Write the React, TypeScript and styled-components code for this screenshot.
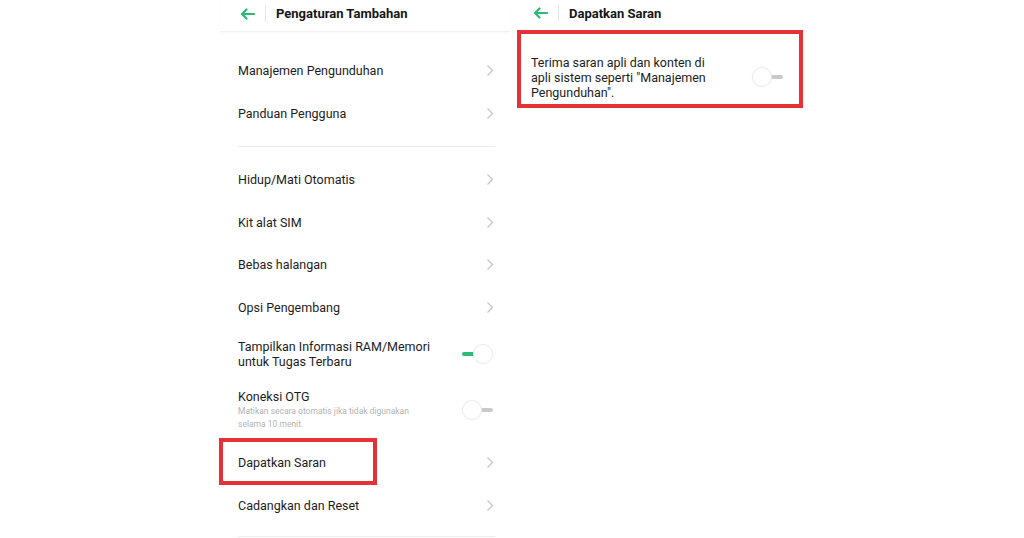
import styled, { createGlobalStyle } from "styled-components";

const GlobalStyle = createGlobalStyle`
  body {
    margin: 0;
    background: #ffffff;
    font-family: Roboto, "Liberation Sans", Arial, sans-serif;
    color: #1c1c1c;
  }
`;

const Page = styled.div`
  display: flex;
  align-items: flex-start;
  width: 1024px;
  height: 538px;
  padding-left: 220px;
  box-sizing: border-box;
  overflow: hidden;
`;

const Panel = styled.section<{ $width: number }>`
  width: ${(p) => p.$width}px;
  display: flex;
  flex-direction: column;
`;

const Header = styled.header<{ $pad: number; $shadow?: boolean }>`
  height: ${(p) => (p.$shadow ? 32 : 30)}px;
  display: flex;
  align-items: center;
  padding-left: ${(p) => p.$pad}px;
  padding-bottom: 4px;
  box-sizing: border-box;
  border-bottom: ${(p) => (p.$shadow ? "1px solid #f1f1f1" : "none")};
  box-shadow: ${(p) => (p.$shadow ? "0 1px 2px rgba(0,0,0,0.03)" : "none")};
`;

const Divider = styled.span`
  width: 1px;
  height: 16px;
  background: #e6e6e6;
  margin: 0 10px 0 10px;
`;

const Title = styled.h1`
  margin: 0;
  font-size: 13px;
  font-weight: 700;
  color: #161616;
`;

const List = styled.div`
  padding: 16.5px 15px 0 18px;
  display: flex;
  flex-direction: column;
`;

const Group = styled.div<{ $top?: number }>`
  display: flex;
  flex-direction: column;
  margin-top: ${(p) => p.$top ?? 0}px;
`;

const Rule = styled.div<{ $top: number }>`
  height: 1px;
  background: #ececec;
  margin-top: ${(p) => p.$top}px;
`;

const Row = styled.div<{ $h?: number; $mark?: boolean }>`
  position: relative;
  height: ${(p) => p.$h ?? 42.5}px;
  display: flex;
  align-items: center;
  justify-content: space-between;

  ${(p) =>
    p.$mark &&
    `
    &::before {
      content: "";
      position: absolute;
      left: -19px;
      top: -4px;
      width: 158px;
      height: 47px;
      border: 4px solid #e53238;
      box-sizing: border-box;
    }
  `}
`;

const Texts = styled.div`
  display: flex;
  flex-direction: column;
`;

const Label = styled.div`
  font-size: 12.5px;
  line-height: 15px;
  color: #1c1c1c;
`;

const Sub = styled.div`
  font-size: 8.5px;
  line-height: 13px;
  color: #b3b3b3;
  margin-top: 1px;
`;

const SuggestBox = styled.div`
  margin: 0 0 0 7px;
  width: 286px;
  height: 78px;
  border: 4px solid #e53238;
  box-sizing: border-box;
  display: flex;
  align-items: center;
  justify-content: space-between;
  padding: 16px 14px 0 10px;
`;

const BoxText = styled.div`
  font-size: 12.5px;
  line-height: 15px;
  color: #1c1c1c;
  width: 190px;
`;

const Track = styled.div`
  position: relative;
  width: 31px;
  height: 22px;
  margin-right: 2px;
  flex-shrink: 0;
`;

const Bar = styled.span<{ $on: boolean }>`
  position: absolute;
  top: 9px;
  ${(p) => (p.$on ? "left: 0;" : "right: 0;")}
  width: 13px;
  height: 4px;
  border-radius: 2px;
  background: ${(p) => (p.$on ? "#2dba74" : "#c9c9c9")};
`;

const Knob = styled.span<{ $on: boolean }>`
  position: absolute;
  top: 1px;
  ${(p) => (p.$on ? "right: 0;" : "left: 0;")}
  width: 20px;
  height: 20px;
  border-radius: 50%;
  background: #fff;
  box-sizing: border-box;
  border: 1px solid #ececec;
  box-shadow: 0 0 2px rgba(0, 0, 0, 0.05);
`;

function Toggle({ on }: { on: boolean }) {
  return (
    <Track>
      <Bar $on={on} />
      <Knob $on={on} />
    </Track>
  );
}

function BackArrow() {
  return (
    <svg width="15" height="12" viewBox="0 0 15 12" fill="none">
      <path
        d="M14 6H2M6.5 1.5L2 6l4.5 4.5"
        stroke="#2dba74"
        strokeWidth="2.2"
        strokeLinecap="round"
        strokeLinejoin="round"
      />
    </svg>
  );
}

function Chevron() {
  return (
    <svg width="8" height="13" viewBox="0 0 8 13" fill="none" style={{ marginRight: 1 }}>
      <path d="M1.5 1.5L6.5 6.5L1.5 11.5" stroke="#c6c6c6" strokeWidth="1.3" />
    </svg>
  );
}

const first = ["Manajemen Pengunduhan", "Panduan Pengguna"];
const second = ["Hidup/Mati Otomatis", "Kit alat SIM", "Bebas halangan", "Opsi Pengembang"];

export default function App() {
  return (
    <>
      <GlobalStyle />
      <Page>
        <Panel $width={290}>
          <Header $pad={20} $shadow>
            <BackArrow />
            <Divider />
            <Title>Pengaturan Tambahan</Title>
          </Header>
          <List>
            <Group>
              {first.map((t) => (
                <Row key={t} $h={43}>
                  <Label>{t}</Label>
                  <Chevron />
                </Row>
              ))}
            </Group>
            <Rule $top={11} />
            <Group $top={12}>
              {second.map((t) => (
                <Row key={t}>
                  <Label>{t}</Label>
                  <Chevron />
                </Row>
              ))}
              <Row $h={50}>
                <Label>
                  Tampilkan Informasi RAM/Memori
                  <br />
                  untuk Tugas Terbaru
                </Label>
                <Toggle on />
              </Row>
              <Row $h={63}>
                <Texts>
                  <Label>Koneksi OTG</Label>
                  <Sub>
                    Matikan secara otomatis jika tidak digunakan
                    <br />
                    selama 10 menit.
                  </Sub>
                </Texts>
                <Toggle on={false} />
              </Row>
              <Row $mark>
                <Label>Dapatkan Saran</Label>
                <Chevron />
              </Row>
              <Row>
                <Label>Cadangkan dan Reset</Label>
                <Chevron />
              </Row>
            </Group>
            <Rule $top={9} />
          </List>
        </Panel>
        <Panel $width={300}>
          <Header $pad={23}>
            <BackArrow />
            <Divider />
            <Title>Dapatkan Saran</Title>
          </Header>
          <SuggestBox>
            <BoxText>
              Terima saran apli dan konten di apli sistem seperti "Manajemen
              Pengunduhan".
            </BoxText>
            <Toggle on={false} />
          </SuggestBox>
        </Panel>
      </Page>
    </>
  );
}
